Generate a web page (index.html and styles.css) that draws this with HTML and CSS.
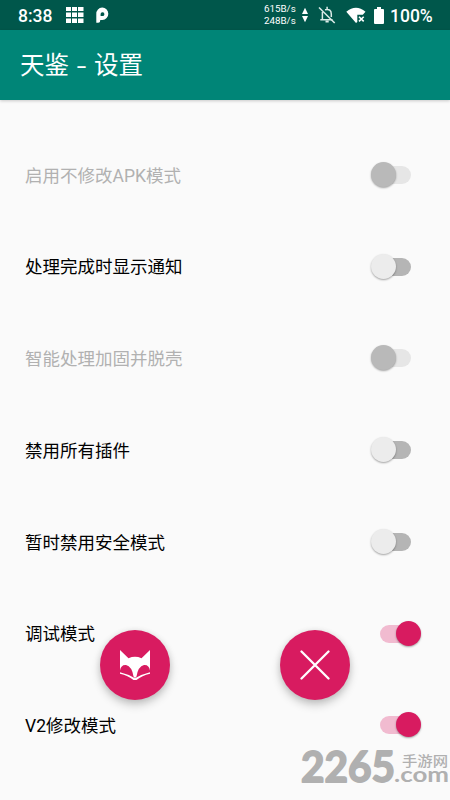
FILE: index.html
```html
<!DOCTYPE html>
<html lang="zh-CN">
<head>
<meta charset="utf-8">
<meta name="viewport" content="width=device-width, initial-scale=1">
<title>天鉴 - 设置</title>
<link rel="stylesheet" href="styles.css">
</head>
<body>
<div class="screen">
  <header class="status">
    <div class="status-left">
      <span class="clock">8:38</span>
      <svg class="grid-icon" width="18" height="18" viewBox="0 0 18 18"><path d="M0 1h5v4H0zM6 1h5v4H6zM12 1h5.500v4H12zM0 6.500h5v4.500H0zM6 6.500h5v4.500H6zM12 6.500h5.500v4.500H12zM0 12.500h5V17H0zM6 12.500h5V17H6zM12 12.500h5.500V17H12z"/></svg>
      <svg class="p-icon" width="13" height="17" viewBox="0 0 13 17"><path fill-rule="evenodd" d="M.3 15.700V7A6 6.200 0 1 1 6.400 13H4.200V13.700A2 2 0 0 1 2.200 15.700ZM4.600 9.100H6.300A1.900 1.900 0 1 0 4.600 7.100Z"/></svg>
    </div>
    <div class="status-right">
      <div class="speed"><span>615B/s</span><span>248B/s</span></div>
      <svg class="arrows" width="6" height="16" viewBox="0 0 6 16"><path d="M3 .8L6 7H0zM0 9H6L3 15.200z"/></svg>
      <svg class="bell" width="18" height="18" viewBox="0 0 18 18" fill="none" stroke-width="1.500"><path fill="none" d="M4.400 6V13.300M2.300 13.700H14.500M7 3.700Q13.300 2.300 13.300 8V11M9.100 .8V3.500"/><path d="M1 1.500L16.700 17"/><path d="M7.500 15.500H10.700" stroke-width="2"/></svg>
      <svg class="wifi" width="20" height="17" viewBox="0 0 20 17"><path d="M.3 4.700Q10-3 19.500 4.700L16.800 7.800H11.300V15L10 16z"/><path d="M13 9.700L17.700 14.400M17.700 9.700L13 14.400" stroke="#fff" stroke-width="1.600"/></svg>
      <svg class="battery" width="10" height="17" viewBox="0 0 10 17"><path d="M3 0H7V2H9Q10 2 10 3V16Q10 17 9 17H1Q0 17 0 16V3Q0 2 1 2H3z"/></svg>
      <span class="percent">100%</span>
    </div>
  </header>
  <h1 class="toolbar">天鉴<span class="dash"> - </span>设置</h1>
  <main class="settings">
    <div class="row disabled"><span>启用不修改APK模式</span><i class="switch"></i></div>
    <div class="row"><span>处理完成时显示通知</span><i class="switch"></i></div>
    <div class="row disabled"><span>智能处理加固并脱壳</span><i class="switch"></i></div>
    <div class="row"><span>禁用所有插件</span><i class="switch"></i></div>
    <div class="row"><span>暂时禁用安全模式</span><i class="switch"></i></div>
    <div class="row"><span>调试模式</span><i class="switch on"></i></div>
    <div class="row"><span>V2修改模式</span><i class="switch on"></i></div>
  </main>
  <button class="fab fab-fox" aria-label="fox">
    <svg width="30" height="30" viewBox="0 0 30 30"><path d="M0 0L8.500 8.200Q15 5.500 21.500 8.200L30 0V20.500Q29 14.500 24 15Q18 16.500 16.500 26.500L15 28L13.500 26.500Q12 16.500 6 15Q1 14.500 0 20.500z"/><path d="M0 22.200Q8 24 15 28.300Q22 24 30 22.200V23.700Q22 25.500 16.500 30H13.500Q8 25.500 0 23.700z"/></svg>
  </button>
  <button class="fab fab-close" aria-label="close">
    <svg width="30" height="30" viewBox="0 0 30 30"><path d="M1.500 1.500L28.500 28.500M28.500 1.500L1.500 28.500" stroke="#fff" stroke-width="2.300" stroke-linecap="round"/></svg>
  </button>
  <svg class="mark" width="160" height="50" viewBox="0 0 160 50">
    <text class="mark-num" x="11" y="31" textLength="94" lengthAdjust="spacingAndGlyphs">2265</text>
    <text class="mark-cn" x="112" y="14.500" textLength="46" lengthAdjust="spacingAndGlyphs">手游网</text>
    <text class="mark-com" x="104" y="31" textLength="55" lengthAdjust="spacingAndGlyphs">.com</text>
  </svg>
</div>
</body>
</html>
```

FILE: styles.css
```css
* { box-sizing: border-box; }
body { margin: 0; font-family: Roboto, "Noto Sans CJK SC", sans-serif; }
.screen { position: relative; width: 450px; height: 800px; overflow: hidden; background: #fafafa; }
svg { display: block; fill: #fff; flex: none; }

.status { display: flex; justify-content: space-between; height: 30px; padding: 0 17px 0 18px; background: #00574b; color: #fff; }
.status-left, .status-right { display: flex; align-items: center; }
.clock, .percent { font-size: 17.500px; font-weight: 500; padding-top: 2px; line-height: 30px; }
.clock { width: 34px; }
.grid-icon { margin-left: 14px; }
.p-icon { margin-left: 12px; }
.speed { display: flex; flex-direction: column; width: 34px; padding-bottom: 1px; font-size: 9.800px; line-height: 12px; }
.arrows { margin-left: 4px; }
.bell { margin-left: 10px; stroke: #dcebe8; }
.wifi { margin-left: 10px; }
.battery { margin-left: 8px; }
.percent { width: 43px; margin-left: 6px; }

.toolbar { position: relative; display: flex; height: 70px; margin: 0; padding-left: 20px; background: #008577; color: #fff; font-size: 24.500px; font-weight: 400; line-height: 72px; box-shadow: 0 1px 3px rgba(0, 0, 0, .2); white-space: nowrap; }
.dash { width: 25px; text-align: center; white-space: pre; transform: scaleX(1.4); }

.settings { padding-top: 29px; }
.row { display: flex; align-items: center; justify-content: space-between; height: 91.750px; padding: 0 29px 0 25px; color: #000; font-size: 17.500px; white-space: nowrap; }
.row > span { padding-bottom: 1.500px; }
.disabled { color: #b1b1b1; }

.switch { position: relative; width: 50px; height: 26px; }
.switch::before, .switch::after { content: ""; position: absolute; }
.switch::before { left: 5px; top: 4px; width: 35px; height: 18px; border-radius: 9px; background: #b5b5b5; }
.switch::after { left: 0; top: 0; width: 25px; height: 25px; border-radius: 50%; background: #ececec; box-shadow: 0 1px 2px rgba(0, 0, 0, .35); }
.disabled .switch::before { background: #e6e6e6; }
.disabled .switch::after { background: #b9b9b9; }
.switch.on::before { left: 9px; background: #f1bbd0; }
.switch.on::after { left: 25px; background: #d81b60; }

.fab { position: absolute; top: 630px; display: flex; align-items: center; justify-content: center; width: 70px; height: 70px; padding: 0; border: 0; border-radius: 50%; background: #d81b60; box-shadow: 0 5px 10px rgba(0, 0, 0, .2), 0 1px 6px rgba(0, 0, 0, .1); }
.fab-fox { left: 100px; }
.fab-close { left: 280px; }

.mark { position: absolute; left: 290px; top: 751px; overflow: visible; fill: #b0b0b0; }
.mark-num { font: 700 42px Lato, sans-serif; stroke: #b0b0b0; stroke-width: 1.800px; stroke-linejoin: round; }
.mark-cn { font: 500 14px/1 "Noto Sans CJK SC", sans-serif; }
.mark-com { font: 700 20px/1 Lato, sans-serif; }
```
